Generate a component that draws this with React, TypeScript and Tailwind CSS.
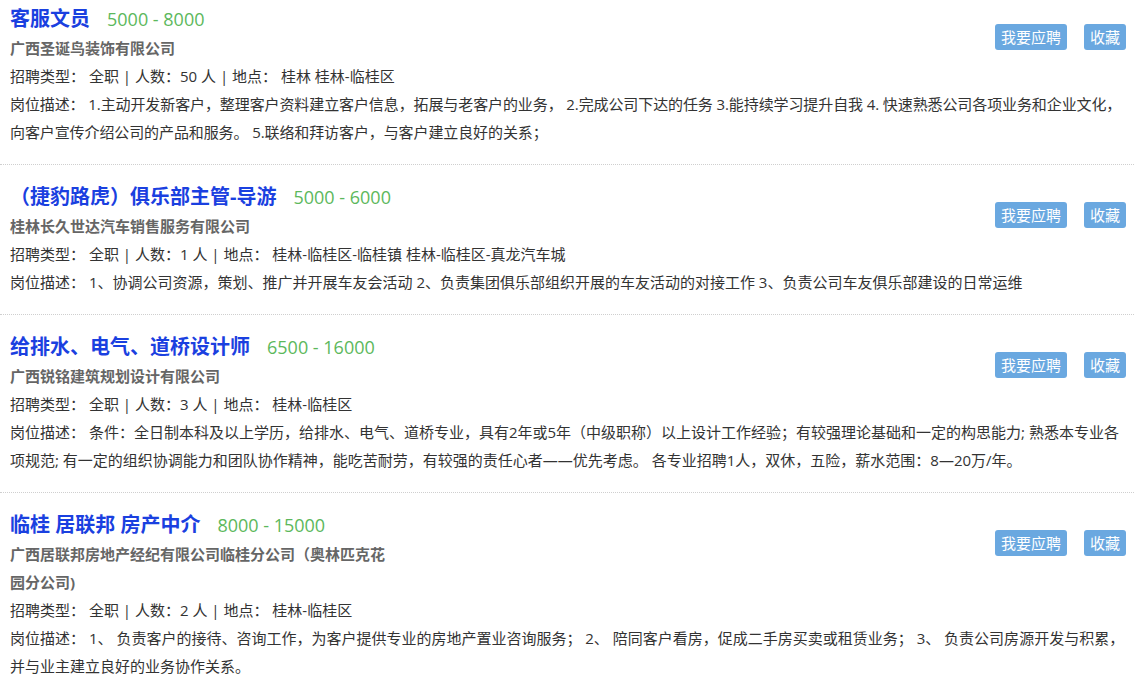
import React from 'react';

interface Job {
  id: number;
  title: string;
  salary: string;
  company: string;
  headcount: string;
  location: string;
  description: string;
  tight?: boolean;
}

const jobs: Job[] = [
  {
    id: 1,
    title: '客服文员',
    salary: '5000 - 8000',
    company: '广西圣诞鸟装饰有限公司',
    headcount: '50',
    location: '桂林 桂林-临桂区',
    description:
      '1.主动开发新客户，整理客户资料建立客户信息，拓展与老客户的业务， 2.完成公司下达的任务 3.能持续学习提升自我 4. 快速熟悉公司各项业务和企业文化，向客户宣传介绍公司的产品和服务。 5.联络和拜访客户，与客户建立良好的关系；',
    tight: true,
  },
  {
    id: 2,
    title: '（捷豹路虎）俱乐部主管-导游',
    salary: '5000 - 6000',
    company: '桂林长久世达汽车销售服务有限公司',
    headcount: '1',
    location: '桂林-临桂区-临桂镇 桂林-临桂区-真龙汽车城',
    description:
      '1、协调公司资源，策划、推广并开展车友会活动 2、负责集团俱乐部组织开展的车友活动的对接工作 3、负责公司车友俱乐部建设的日常运维',
  },
  {
    id: 3,
    title: '给排水、电气、道桥设计师',
    salary: '6500 - 16000',
    company: '广西锐铭建筑规划设计有限公司',
    headcount: '3',
    location: '桂林-临桂区',
    description:
      '条件：全日制本科及以上学历，给排水、电气、道桥专业，具有2年或5年（中级职称）以上设计工作经验；有较强理论基础和一定的构思能力; 熟悉本专业各项规范; 有一定的组织协调能力和团队协作精神，能吃苦耐劳，有较强的责任心者——优先考虑。 各专业招聘1人，双休，五险，薪水范围：8—20万/年。',
  },
  {
    id: 4,
    title: '临桂 居联邦 房产中介',
    salary: '8000 - 15000',
    company: '广西居联邦房地产经纪有限公司临桂分公司（奥林匹克花园分公司)',
    headcount: '2',
    location: '桂林-临桂区',
    description:
      '1、 负责客户的接待、咨询工作，为客户提供专业的房地产置业咨询服务； 2、 陪同客户看房，促成二手房买卖或租赁业务； 3、 负责公司房源开发与积累，并与业主建立良好的业务协作关系。',
  },
];

function JobItem({ job, first }: { job: Job; first: boolean }) {
  return (
    <li
      className={`border-b border-dotted border-[#cfcfcf] pl-[10px] pr-[8px] pb-[18px] ${
        first ? 'pt-[4px]' : 'pt-[17px]'
      }`}
    >
      <div className="flex items-start justify-between">
        <div>
          <div className="flex items-center h-[30px]">
            <h3 className="text-[20px] font-bold text-[#1a40e0] leading-[30px]">{job.title}</h3>
            <span className="ml-[17px] font-['Open_Sans'] text-[18px] text-[#5cb85c] leading-[30px]">
              {job.salary}
            </span>
          </div>
          <p className="w-[380px] text-[15px] font-bold text-[#666] leading-[28px]">{job.company}</p>
        </div>
        <div className="mt-[20px] flex gap-[17px]">
          <button className="h-[26px] w-[72px] rounded-[3px] bg-[#6aa8e0] text-[15px] text-white leading-[26px]">
            我要应聘
          </button>
          <button className="h-[26px] w-[42px] rounded-[3px] bg-[#6aa8e0] text-[15px] text-white leading-[26px]">
            收藏
          </button>
        </div>
      </div>
      <p className="text-[15px] leading-[28px] text-[#333]">
        招聘类型： 全职 | 人数：{job.headcount} 人 | 地点： {job.location}
      </p>
      <p className={`text-[15px] leading-[28px] text-[#333] ${job.tight ? 'tracking-[-0.1px]' : ''}`}>
        岗位描述： {job.description}
      </p>
    </li>
  );
}

export default function App() {
  return (
    <div
      className="min-h-screen bg-white"
      style={{ fontFamily: '"Open Sans", "Noto Sans CJK SC", sans-serif' }}
    >
      <ul>
        {jobs.map((job, i) => (
          <JobItem key={job.id} job={job} first={i === 0} />
        ))}
      </ul>
    </div>
  );
}
